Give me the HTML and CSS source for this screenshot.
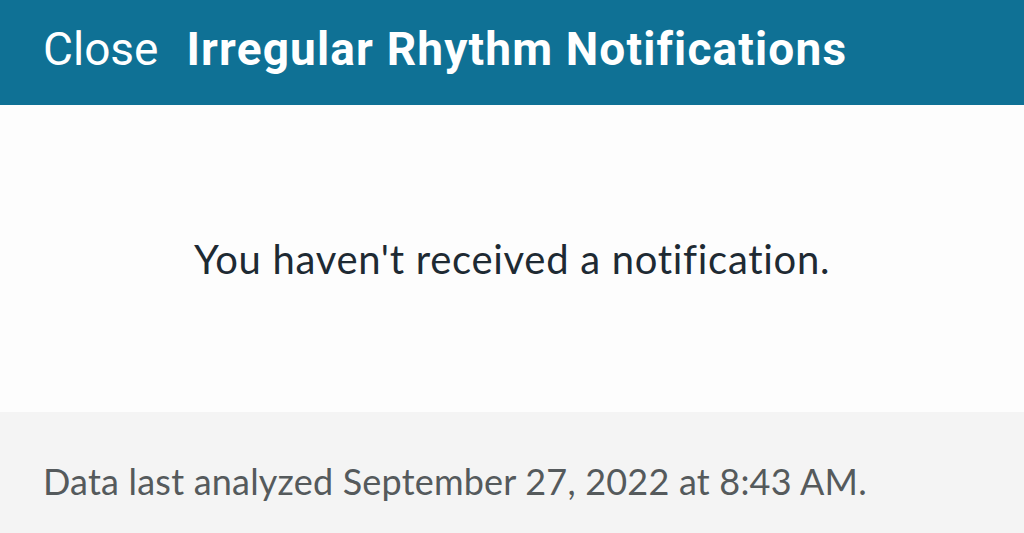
FILE: index.html
```html
<!doctype html>
<html lang="en">
  <head>
    <meta charset="UTF-8" />
    <meta name="viewport" content="width=device-width, initial-scale=1.0" />
    <title>Irregular Rhythm Notifications</title>
    <link rel="stylesheet" href="styles.css">
  </head>
  <body>
    <div class="top-bar">
      <span class="close-link">Close</span>
      <h1 class="bar-title">Irregular Rhythm Notifications</h1>
    </div>

    <div class="empty-block">
      <p class="empty-text">You haven't received a notification.</p>
    </div>

    <div class="footer-block">
      <p class="footer-text">Data last analyzed September 27, 2022 at 8:43 AM.</p>
    </div>
  </body>
</html>
```

FILE: styles.css
```css
html, body {
  margin: 0px;
  height: 100%;
}
body {
  background-color: #fdfdfd;
  display: flex;
  flex-direction: column;
  overflow: hidden;
}

.top-bar {
  background-color: #0f7195;
  height: 105px;
  box-sizing: border-box;
  display: flex;
  align-items: center;
  gap: 28px;
  padding: 0px 43px 8px 43px;
  flex-shrink: 0;
}
.close-link {
  color: #ffffff;
  font-family: Roboto, sans-serif;
  font-size: 46px;
}
.bar-title {
  color: #ffffff;
  font-family: Roboto, sans-serif;
  font-size: 46px;
  font-weight: 700;
  letter-spacing: 1.15px;
  margin: 0px;
}

.empty-block {
  height: 307px;
  display: flex;
  align-items: center;
  justify-content: center;
  flex-shrink: 0;
}
.empty-text {
  color: #1e2a33;
  font-family: Lato, sans-serif;
  font-size: 40px;
  letter-spacing: 0.7px;
  margin: 0px;
}

.footer-block {
  background-color: #f4f4f4;
  flex: 1;
  display: flex;
  align-items: center;
  padding: 16px 43px 0px 43px;
}
.footer-text {
  color: #555a5c;
  font-family: Lato, sans-serif;
  font-size: 36px;
  letter-spacing: 0.2px;
  margin: 0px;
}
```
